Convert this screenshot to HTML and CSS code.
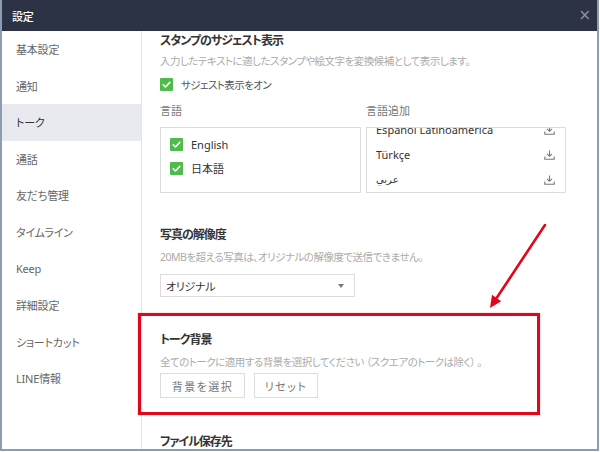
FILE: index.html
```html
<!DOCTYPE html>
<html lang="ja">
<head>
<meta charset="utf-8">
<title>設定</title>
<link rel="stylesheet" href="styles.css">
</head>
<body>
<div class="window">
  <div class="titlebar">
    <span class="title">設定</span>
    <span class="close">×</span>
  </div>
  <div class="main">
    <nav class="sidebar">
      <div class="nav-item">基本設定</div>
      <div class="nav-item">通知</div>
      <div class="nav-item active">トーク</div>
      <div class="nav-item">通話</div>
      <div class="nav-item">友だち管理</div>
      <div class="nav-item">タイムライン</div>
      <div class="nav-item">Keep</div>
      <div class="nav-item">詳細設定</div>
      <div class="nav-item">ショートカット</div>
      <div class="nav-item">LINE情報</div>
    </nav>
    <div class="content">
      <section class="sec">
        <h2 class="sec-title">スタンプのサジェスト表示</h2>
        <p class="sec-desc">入力したテキストに適したスタンプや絵文字を変換候補として表示します。</p>
        <div class="check-row">
          <span class="cb"><svg viewBox="0 0 13 13" width="13" height="13"><path d="M3.2 6.8l2.2 2.2 4.4-4.6" fill="none" stroke="#fff" stroke-width="1.6" stroke-linecap="round" stroke-linejoin="round"/></svg></span>
          <span class="check-label">サジェスト表示をオン</span>
        </div>
        <div class="lang-grid">
          <div class="lang-label">言語</div>
          <div class="lang-label">言語追加</div>
          <div class="lang-box">
            <div class="lang-item">
              <span class="cb"><svg viewBox="0 0 13 13" width="13" height="13"><path d="M3.2 6.8l2.2 2.2 4.4-4.6" fill="none" stroke="#fff" stroke-width="1.6" stroke-linecap="round" stroke-linejoin="round"/></svg></span>
              <span class="lang-name">English</span>
            </div>
            <div class="lang-item">
              <span class="cb"><svg viewBox="0 0 13 13" width="13" height="13"><path d="M3.2 6.8l2.2 2.2 4.4-4.6" fill="none" stroke="#fff" stroke-width="1.6" stroke-linecap="round" stroke-linejoin="round"/></svg></span>
              <span class="lang-name">日本語</span>
            </div>
          </div>
          <div class="lang-box add">
            <div class="add-list">
              <div class="add-item"><span class="lang-name">Español Latinoamérica</span>
                <svg class="dl" viewBox="0 0 11 10" width="11" height="10"><path d="M5.5 0.5v5.5M3 3.8l2.5 2.5 2.5-2.5M0.8 6.5v2.8h9.4v-2.8" fill="none" stroke="#7a7a7a" stroke-width="1.1"/></svg></div>
              <div class="add-item"><span class="lang-name">Türkçe</span>
                <svg class="dl" viewBox="0 0 11 10" width="11" height="10"><path d="M5.5 0.5v5.5M3 3.8l2.5 2.5 2.5-2.5M0.8 6.5v2.8h9.4v-2.8" fill="none" stroke="#7a7a7a" stroke-width="1.1"/></svg></div>
              <div class="add-item"><span class="lang-name arabic">عربي</span>
                <svg class="dl" viewBox="0 0 11 10" width="11" height="10"><path d="M5.5 0.5v5.5M3 3.8l2.5 2.5 2.5-2.5M0.8 6.5v2.8h9.4v-2.8" fill="none" stroke="#7a7a7a" stroke-width="1.1"/></svg></div>
            </div>
          </div>
        </div>
      </section>

      <section class="sec sec-photo">
        <h2 class="sec-title">写真の解像度</h2>
        <p class="sec-desc">20MBを超える写真は、オリジナルの解像度で送信できません。</p>
        <div class="select">
          <span class="select-value">オリジナル</span>
          <span class="select-caret"></span>
        </div>
      </section>

      <section class="sec sec-bg">
        <h2 class="sec-title">トーク背景</h2>
        <p class="sec-desc desc-bg">全てのトークに適用する背景を選択してください （スクエアのトークは除く） 。</p>
        <div class="btn-row">
          <button class="btn btn-wide">背景を選択</button>
          <button class="btn btn-narrow">リセット</button>
        </div>
      </section>

      <section class="sec sec-file">
        <h2 class="sec-title">ファイル保存先</h2>
      </section>
    </div>
  </div>

  <div class="highlight"></div>
  <svg class="arrow" viewBox="0 0 600 452" width="600" height="452">
    <line x1="545" y1="225" x2="496.6" y2="298" stroke="#e2061c" stroke-width="2.6" stroke-linecap="round"/>
    <polygon points="490,308 501.2,301.2 492,294.8" fill="#e2061c"/>
  </svg>
</div>
</body>
</html>
```

FILE: styles.css
```css
* { box-sizing: border-box; }

html, body {
  margin: 0;
  padding: 0;
  background: #ffffff;
}

body {
  font-family: "Noto Sans", "Noto Sans CJK JP", sans-serif;
  font-feature-settings: "palt" 1;
  color: #333;
}

.window {
  position: relative;
  width: 599px;
  height: 451px;
  border: 2px solid #8e9cb1;
  border-top: 0;
  background: #fff;
  overflow: hidden;
  display: flex;
  flex-direction: column;
}

.titlebar {
  height: 31px;
  flex: 0 0 31px;
  background: #2c3345;
  display: flex;
  align-items: center;
  justify-content: space-between;
  padding: 0 6px 0 10px;
}

.title {
  color: #ffffff;
  font-size: 11px;
  font-weight: 500;
  letter-spacing: -0.3px;
}

.close {
  color: #8c93a2;
  font-family: "DejaVu Sans", sans-serif;
  font-size: 15px;
  line-height: 1;
}

.main {
  flex: 1;
  display: flex;
  min-height: 0;
}

.sidebar {
  width: 140px;
  flex: 0 0 140px;
  border-right: 1px solid #e4e4e4;
  display: flex;
  flex-direction: column;
}

.nav-item {
  height: 36.55px;
  display: flex;
  align-items: center;
  padding-left: 14px;
  font-size: 11px;
  color: #666;
  letter-spacing: -0.2px;
}

.nav-item.active {
  background: #e8eaf0;
  color: #333;
}

.content {
  flex: 1;
  padding: 1px 0 0 18px;
  overflow: hidden;
}

.sec { margin: 0; }

.sec-title {
  margin: 0;
  font-size: 12px;
  font-weight: 700;
  line-height: 18px;
  color: #333;
  letter-spacing: -1px;
}

.sec-desc {
  margin: 3px 0 0;
  font-size: 10.5px;
  line-height: 16px;
  color: #ababab;
  letter-spacing: -0.5px;
}

.check-row {
  margin-top: 6px;
  height: 18px;
  display: flex;
  align-items: center;
}

.cb {
  width: 13px;
  height: 13px;
  flex: 0 0 13px;
  background: #4fbb4a;
  border-radius: 1px;
  display: flex;
}

.check-label {
  margin-left: 8px;
  font-size: 10.5px;
  color: #555;
  line-height: 18px;
  letter-spacing: -0.6px;
  position: relative;
  top: 1px;
}

.lang-grid {
  margin-top: 10px;
  display: grid;
  grid-template-columns: 201px 200px;
  column-gap: 5px;
  row-gap: 8px;
}

.lang-label {
  font-size: 11px;
  line-height: 16px;
  color: #777;
}

.lang-box {
  height: 66px;
  border: 1px solid #dcdcdc;
  padding: 4px 9px;
  overflow: hidden;
}

.lang-item {
  height: 24px;
  display: flex;
  align-items: center;
}

.lang-item .lang-name {
  margin-left: 8px;
}

.lang-name {
  font-size: 11px;
  color: #333;
}

.lang-box.add {
  padding: 0 10px 0 9px;
}

.add-list {
  margin-top: -11px;
}

.add-item {
  height: 25px;
  display: flex;
  align-items: center;
  justify-content: space-between;
}

.arabic {
  font-family: "DejaVu Sans", sans-serif;
  font-size: 10px;
}

.dl { display: block; }

.sec-photo { margin-top: 33px; }

.sec-photo .sec-desc { margin-top: 5px; }

.select {
  margin-top: 9px;
  width: 195px;
  height: 23px;
  border: 1px solid #dcdcdc;
  display: flex;
  align-items: center;
  justify-content: space-between;
  padding: 0 10px 0 5px;
}

.select-value {
  font-size: 11px;
  color: #333;
  letter-spacing: -0.3px;
}

.select-caret {
  width: 0;
  height: 0;
  border-left: 3.5px solid transparent;
  border-right: 3.5px solid transparent;
  border-top: 4px solid #777;
}

.sec-bg { margin-top: 34px; }

.desc-bg { margin-top: 5px; }

.btn-row {
  margin-top: 3px;
  display: flex;
  gap: 9px;
}

.btn {
  height: 25px;
  border: 1px solid #dcdcdc;
  background: #fff;
  font-family: "Noto Sans CJK JP", sans-serif;
  font-feature-settings: "palt" 1;
  font-size: 11px;
  color: #777;
  padding: 0;
  letter-spacing: 1.5px;
}

.btn-wide { width: 85px; }
.btn-narrow { width: 64px; }

.sec-file { margin-top: 35px; }

.highlight {
  position: absolute;
  left: 136px;
  top: 313px;
  width: 402px;
  height: 102px;
  border: 3px solid #e2061c;
  box-shadow: 0 0 1px rgba(226, 6, 28, 0.5);
  pointer-events: none;
}

.arrow {
  position: absolute;
  left: -2px;
  top: 0;
  pointer-events: none;
}
```
